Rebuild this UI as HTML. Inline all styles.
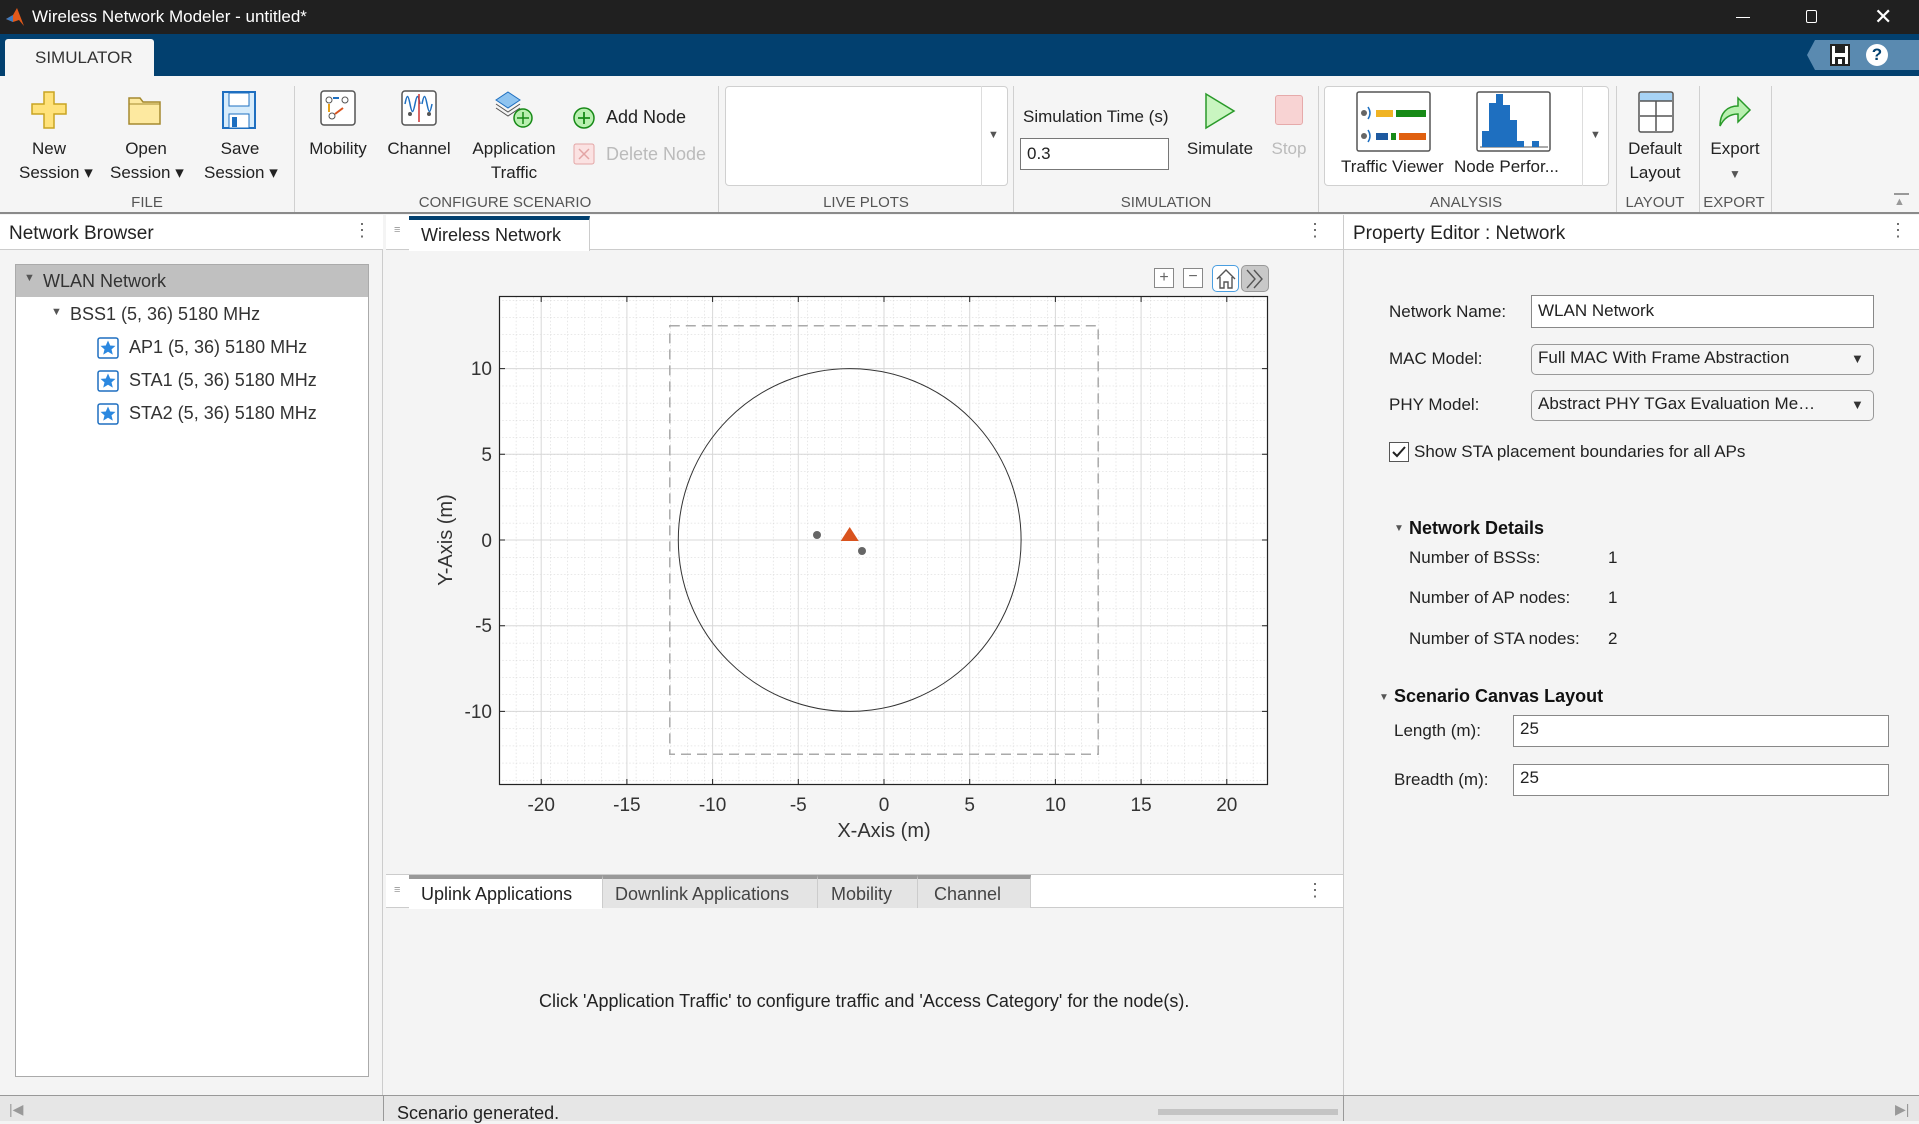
<!DOCTYPE html>
<html><head><meta charset="utf-8"><style>
*{box-sizing:border-box;margin:0;padding:0}
body{width:1919px;height:1121px;overflow:hidden;position:relative;background:#f4f4f4;font-family:"Liberation Sans",sans-serif;color:#222}
.a{position:absolute}
.t{position:absolute;white-space:nowrap}
.rb{font-size:17px;color:#222;text-align:center;line-height:24px}
.sec{position:absolute;top:194px;font-size:15px;color:#555;transform:translateX(-50%);white-space:nowrap}
.sep{position:absolute;top:86px;width:1px;height:126px;background:#d0d0d0}
.lbl{font-size:17px;color:#222}
</style></head><body>
<!-- title bar -->
<div class="a" style="left:0;top:0;width:1919px;height:34px;background:#202020"></div>
<svg class="a" style="left:4px;top:6px" width="22" height="22" viewBox="0 0 22 22"><path d="M2 13 L9 9 L13 2 L20 20 L15 14 L9 16 Z" fill="#e2591a"/><path d="M2 13 L9 9 L9 16Z" fill="#3d7bbf"/></svg>
<div class="t" style="left:32px;top:7px;color:#fff;font-size:17px">Wireless Network Modeler - untitled*</div>
<div class="a" style="left:1736px;top:17px;width:14px;height:1px;background:#fff"></div>
<div class="a" style="left:1806px;top:10px;width:11px;height:13px;border:1.5px solid #fff;border-radius:2px"></div>
<div class="t" style="left:1874px;top:4px;color:#fff;font-size:22px">✕</div>
<!-- blue bar -->
<div class="a" style="left:0;top:34px;width:1919px;height:42px;background:#02406f"></div>
<div class="a" style="left:5px;top:39px;width:149px;height:37px;background:#f5f5f5;border-radius:3px 3px 0 0"></div>
<div class="t" style="left:35px;top:48px;font-size:17px;color:#333">SIMULATOR</div>
<div class="a" style="left:1807px;top:40px;width:112px;height:30px;background:#5a8ab0;clip-path:polygon(8px 0,100% 0,100% 100%,8px 100%,0 50%)"></div>
<svg class="a" style="left:1829px;top:43px" width="22" height="24"><rect x="2" y="2" width="18" height="20" fill="#fff" stroke="#222" stroke-width="2"/><rect x="6" y="3" width="10" height="7" fill="#222"/><rect x="6" y="14" width="10" height="8" fill="#222"/><rect x="9" y="16" width="4" height="5" fill="#fff"/></svg>
<div class="a" style="left:1866px;top:44px;width:22px;height:22px;border-radius:50%;background:#fff;color:#02406f;font-weight:bold;font-size:17px;text-align:center;line-height:22px">?</div>
<!-- ribbon -->
<div class="a" style="left:0;top:76px;width:1919px;height:138px;background:#f5f5f5;border-bottom:2px solid #8a8a8a"></div>
<svg class="a" style="left:30px;top:90px" width="40" height="40"><path d="M14 2h10v12h12v10H24v14H14V24H2V14h12z" fill="#ffe27a" stroke="#c9a422" stroke-width="1.5"/></svg>
<div class="t rb" style="left:19px;top:137px;width:60px">New<br>Session ▾</div>
<svg class="a" style="left:126px;top:92px" width="38" height="36"><path d="M3 6h11l3 4h17v22H3z" fill="#fde9a0" stroke="#a58a30" stroke-width="1.5"/><path d="M3 12h31" stroke="#a58a30"/></svg>
<div class="t rb" style="left:110px;top:137px;width:72px">Open<br>Session ▾</div>
<svg class="a" style="left:221px;top:90px" width="36" height="40"><rect x="2" y="2" width="32" height="36" fill="#d7ecfb" stroke="#1e6fc0" stroke-width="2"/><rect x="8" y="3" width="20" height="13" fill="#fff" stroke="#1e6fc0"/><rect x="8" y="24" width="20" height="14" fill="#fff" stroke="#1e6fc0"/><rect x="11" y="27" width="5" height="10" fill="#1e6fc0"/></svg>
<div class="t rb" style="left:204px;top:137px;width:72px">Save<br>Session ▾</div>
<div class="sep" style="left:294px"></div>
<svg class="a" style="left:320px;top:90px" width="36" height="36"><rect x="1" y="1" width="34" height="34" rx="3" fill="#fff" stroke="#555" stroke-width="1.5"/><circle cx="9" cy="10" r="3" fill="none" stroke="#555"/><circle cx="25" cy="10" r="3" fill="none" stroke="#555"/><circle cx="12" cy="26" r="3" fill="none" stroke="#555"/><path d="M9 14v8" stroke="#e8a21a" stroke-width="2"/><path d="M15 24l8-6" stroke="#d9531e" stroke-width="2"/><path d="M13 8l6 0" stroke="#1e6fc0" stroke-width="2"/></svg>
<div class="t rb" style="left:302px;top:137px;width:72px">Mobility</div>
<svg class="a" style="left:401px;top:90px" width="36" height="36"><rect x="1" y="1" width="34" height="34" rx="3" fill="#fff" stroke="#555" stroke-width="1.5"/><path d="M4 14c2-10 3-10 5 0s3 10 5 0 3-10 5 0M21 14c2-10 3-10 5 0s3 10 5 0" stroke="#1e6fc0" fill="none" stroke-width="1.5"/><path d="M18 4v28" stroke="#c33" stroke-width="1.5"/><circle cx="9" cy="24" r="2" fill="#555"/><circle cx="28" cy="24" r="2" fill="#555"/></svg>
<div class="t rb" style="left:383px;top:137px;width:72px">Channel</div>
<svg class="a" style="left:494px;top:90px" width="42" height="40"><path d="M14 2l12 8-12 8-12-8z" fill="#8fc4f0" stroke="#1e6fc0"/><path d="M2 14l12 8 12-8M2 18l12 8 12-8" fill="none" stroke="#555"/><circle cx="29" cy="28" r="9" fill="#b9f0b0" stroke="#178a17" stroke-width="1.5"/><path d="M29 22v12M23 28h12" stroke="#178a17" stroke-width="1.5"/></svg>
<div class="t rb" style="left:464px;top:137px;width:100px">Application<br>Traffic</div>
<svg class="a" style="left:572px;top:106px" width="24" height="24"><circle cx="12" cy="12" r="10" fill="#b9f0b0" stroke="#178a17" stroke-width="1.5"/><path d="M12 6v12M6 12h12" stroke="#178a17" stroke-width="1.8"/></svg>
<div class="t" style="left:606px;top:107px;font-size:18px">Add Node</div>
<svg class="a" style="left:573px;top:143px" width="22" height="22"><rect x="1" y="1" width="20" height="20" rx="2" fill="#fbe2e2" stroke="#e3a5a5"/><path d="M6 6l10 10M16 6L6 16" stroke="#e3a5a5" stroke-width="1.5"/></svg>
<div class="t" style="left:606px;top:144px;font-size:18px;color:#bbb">Delete Node</div>
<div class="sep" style="left:718px"></div>
<div class="a" style="left:725px;top:86px;width:283px;height:100px;background:#fff;border:1px solid #d0d0d0;border-radius:4px"></div>
<div class="a" style="left:981px;top:86px;width:1px;height:100px;background:#ddd"></div>
<div class="t" style="left:988px;top:129px;font-size:11px;color:#555">▼</div>
<div class="sep" style="left:1013px"></div>
<div class="t" style="left:1023px;top:107px;font-size:17px">Simulation Time (s)</div>
<div class="a" style="left:1020px;top:138px;width:149px;height:32px;background:#fff;border:1px solid #777"></div>
<div class="t" style="left:1027px;top:144px;font-size:17px">0.3</div>
<svg class="a" style="left:1203px;top:92px" width="34" height="38"><path d="M3 2l28 17L3 36z" fill="#c9f5c0" stroke="#2a9a2a" stroke-width="1.5"/></svg>
<div class="t rb" style="left:1180px;top:137px;width:80px">Simulate</div>
<div class="a" style="left:1275px;top:95px;width:28px;height:30px;background:#f8d3d3;border:1px solid #e6aaaa;border-radius:3px"></div>
<div class="t rb" style="left:1264px;top:137px;width:50px;color:#bbb">Stop</div>
<div class="sep" style="left:1318px"></div>
<div class="a" style="left:1324px;top:86px;width:285px;height:100px;background:#fff;border:1px solid #d0d0d0;border-radius:4px"></div>
<div class="a" style="left:1582px;top:86px;width:1px;height:100px;background:#ddd"></div>
<div class="t" style="left:1590px;top:129px;font-size:11px;color:#555">▼</div>
<svg class="a" style="left:1356px;top:91px" width="75" height="61"><rect x="1" y="1" width="73" height="59" rx="2" fill="#fff" stroke="#555" stroke-width="1.5"/><circle cx="8" cy="22" r="3" fill="#666"/><circle cx="8" cy="45" r="3" fill="#666"/><path d="M12 16q4 6 0 12M12 39q4 6 0 12" stroke="#1e6fc0" fill="none" stroke-width="1.5"/><rect x="20" y="19" width="17" height="7" fill="#f0b323"/><rect x="40" y="19" width="30" height="7" fill="#178a17"/><rect x="20" y="42" width="12" height="7" fill="#1e5aa0"/><rect x="35" y="42" width="5" height="7" fill="#178a17"/><rect x="43" y="42" width="27" height="7" fill="#e0600f"/></svg>
<svg class="a" style="left:1476px;top:91px" width="75" height="61"><rect x="1" y="1" width="73" height="59" rx="2" fill="#fff" stroke="#555" stroke-width="1.5"/><path d="M4 56h68" stroke="#555"/><rect x="6" y="40" width="7" height="16" fill="#1e6fc0"/><rect x="13" y="12" width="7" height="44" fill="#1e6fc0"/><rect x="20" y="3" width="7" height="53" fill="#1e6fc0"/><rect x="27" y="14" width="7" height="42" fill="#1e6fc0"/><rect x="34" y="29" width="7" height="27" fill="#1e6fc0"/><rect x="41" y="50" width="7" height="6" fill="#1e6fc0"/><rect x="56" y="50" width="7" height="6" fill="#1e6fc0"/></svg>
<div class="t" style="left:1341px;top:157px;font-size:17px">Traffic Viewer</div>
<div class="t" style="left:1454px;top:157px;font-size:17px">Node Perfor...</div>
<div class="sep" style="left:1616px"></div>
<svg class="a" style="left:1638px;top:91px" width="36" height="42"><rect x="1" y="1" width="34" height="40" rx="2" fill="#fff" stroke="#555" stroke-width="1.5"/><rect x="2" y="2" width="32" height="8" fill="#a7d3f5"/><path d="M2 10h32M2 25h32M18 10v30" stroke="#555" stroke-width="1.5"/></svg>
<div class="t rb" style="left:1620px;top:137px;width:70px">Default<br>Layout</div>
<div class="sep" style="left:1699px"></div>
<svg class="a" style="left:1716px;top:92px" width="36" height="36"><path d="M4 34c0-14 8-20 18-20V6l12 12-12 12v-8c-8 0-14 4-18 12z" fill="#b9f0b0" stroke="#2a9a2a" stroke-width="1.5"/></svg>
<div class="t rb" style="left:1699px;top:137px;width:72px">Export<br><span style="font-size:12px;color:#555">▼</span></div>
<div class="sep" style="left:1771px"></div>
<div class="sec" style="left:147px">FILE</div>
<div class="sec" style="left:505px">CONFIGURE SCENARIO</div>
<div class="sec" style="left:866px">LIVE PLOTS</div>
<div class="sec" style="left:1166px">SIMULATION</div>
<div class="sec" style="left:1466px">ANALYSIS</div>
<div class="sec" style="left:1655px">LAYOUT</div>
<div class="sec" style="left:1734px">EXPORT</div>
<div class="a" style="left:1894px;top:193px;width:15px;height:2px;background:#999"></div>
<div class="t" style="left:1894px;top:196px;font-size:11px;color:#999">▲</div>

<!-- left panel -->
<div class="a" style="left:0;top:215px;width:383px;height:880px;background:#f4f4f4;border-right:1px solid #ccc"></div>
<div class="a" style="left:0;top:215px;width:383px;height:35px;background:#fff;border-bottom:1px solid #ccc"></div>
<div class="t" style="left:9px;top:223px;font-size:19px">Network Browser</div>
<div class="t" style="left:353px;top:220px;font-size:18px;color:#666">⋮</div>
<div class="a" style="left:15px;top:264px;width:354px;height:813px;background:#fff;border:1px solid #aaa"></div>
<div class="a" style="left:16px;top:265px;width:352px;height:32px;background:#c0c0c0"></div>
<div class="t" style="left:24px;top:272px;font-size:11px;color:#555">▼</div>
<div class="t" style="left:43px;top:271px;font-size:18px;color:#333">WLAN Network</div>
<div class="t" style="left:51px;top:306px;font-size:11px;color:#555">▼</div>
<div class="t" style="left:70px;top:304px;font-size:18px;color:#333">BSS1 (5, 36) 5180 MHz</div>
<svg class="a" style="left:97px;top:337px" width="22" height="22"><rect x="1" y="1" width="20" height="20" rx="2" fill="#fff" stroke="#1e6fc0" stroke-width="1.5"/><path d="M11 3.5l2.2 5 5.3.4-4 3.5 1.3 5.2L11 14.8l-4.8 2.8 1.3-5.2-4-3.5 5.3-.4z" fill="#2b88e0"/></svg>
<svg class="a" style="left:97px;top:370px" width="22" height="22"><rect x="1" y="1" width="20" height="20" rx="2" fill="#fff" stroke="#1e6fc0" stroke-width="1.5"/><path d="M11 3.5l2.2 5 5.3.4-4 3.5 1.3 5.2L11 14.8l-4.8 2.8 1.3-5.2-4-3.5 5.3-.4z" fill="#2b88e0"/></svg>
<svg class="a" style="left:97px;top:403px" width="22" height="22"><rect x="1" y="1" width="20" height="20" rx="2" fill="#fff" stroke="#1e6fc0" stroke-width="1.5"/><path d="M11 3.5l2.2 5 5.3.4-4 3.5 1.3 5.2L11 14.8l-4.8 2.8 1.3-5.2-4-3.5 5.3-.4z" fill="#2b88e0"/></svg>
<div class="t" style="left:129px;top:337px;font-size:18px;color:#333">AP1 (5, 36) 5180 MHz</div>
<div class="t" style="left:129px;top:370px;font-size:18px;color:#333">STA1 (5, 36) 5180 MHz</div>
<div class="t" style="left:129px;top:403px;font-size:18px;color:#333">STA2 (5, 36) 5180 MHz</div>

<!-- center -->
<div class="a" style="left:386px;top:215px;width:957px;height:35px;background:#fff;border-bottom:1px solid #ccc"></div>
<div class="t" style="left:394px;top:224px;font-size:11px;color:#999">≡</div>
<div class="a" style="left:409px;top:216px;width:181px;height:35px;background:#fff;border-top:4px solid #02406f;border-right:1px solid #ccc"></div>
<div class="t" style="left:421px;top:225px;font-size:18px;color:#222">Wireless Network</div>
<div class="t" style="left:1306px;top:220px;font-size:18px;color:#666">⋮</div>
<div class="a" style="left:1343px;top:215px;width:1px;height:880px;background:#ccc"></div>
<!-- plot toolbar -->
<div class="a" style="left:1154px;top:268px;width:20px;height:20px;border:1px solid #888;background:#fff;text-align:center;line-height:17px;color:#666;font-size:16px">+</div>
<div class="a" style="left:1183px;top:268px;width:20px;height:20px;border:1px solid #888;background:#fff;text-align:center;line-height:16px;color:#666;font-size:16px">−</div>
<div class="a" style="left:1212px;top:265px;width:27px;height:27px;border:1.5px solid #4a9ee0;border-radius:5px;background:#fff"></div>
<svg class="a" style="left:1214px;top:267px" width="24" height="24"><path d="M3 12L12 3l9 9M6 10v11h4v-6h4v6h4V10" fill="none" stroke="#555" stroke-width="1.4"/></svg>
<div class="a" style="left:1241px;top:265px;width:28px;height:27px;border-radius:5px;background:#c8c8c8;border:1px solid #999"></div>
<svg class="a" style="left:1243px;top:268px" width="24" height="22"><path d="M4 2l8 9-8 9M11 2l8 9-8 9" fill="none" stroke="#555" stroke-width="1.4"/></svg>
<!-- plot -->
<svg class="a" style="left:0;top:0" width="1919" height="1121">
<defs>
<pattern id="mg" x="498.7" y="368.6" width="17.14" height="17.14" patternUnits="userSpaceOnUse">
<path d="M0 0V17.14M0 0H17.14" stroke="#cfcfcf" stroke-width="1" stroke-dasharray="1.5 2" fill="none"/>
</pattern>
<clipPath id="cp"><rect x="499" y="296" width="769" height="489"/></clipPath>
</defs>
<rect x="499" y="296" width="769" height="489" fill="#fff"/>
<g clip-path="url(#cp)">
<rect x="499" y="296" width="769" height="489" fill="url(#mg)"/>
<g stroke="#d8d8d8" stroke-width="1">
<path d="M541.2 296v489M626.9 296v489M712.6 296v489M798.3 296v489M884 296v489M969.7 296v489M1055.4 296v489M1141.1 296v489M1226.8 296v489"/>
<path d="M499 368.6h769M499 454.3h769M499 540h769M499 625.7h769M499 711.4h769"/>
</g>
<rect x="669.8" y="325.8" width="428.4" height="428.4" fill="none" stroke="#aaa" stroke-width="1.5" stroke-dasharray="10 6"/>
<circle cx="849.7" cy="540" r="171.4" fill="none" stroke="#333" stroke-width="1"/>
<path d="M849.7 527l-9 14h18z" fill="#d9531e"/>
<circle cx="817" cy="535" r="4" fill="#666"/>
<circle cx="862" cy="551" r="4" fill="#666"/>
</g>
<rect x="499.5" y="296.5" width="768" height="488" fill="none" stroke="#222" stroke-width="1.2"/>
<g stroke="#222" stroke-width="1">
<path d="M541.2 785v-6M626.9 785v-6M712.6 785v-6M798.3 785v-6M884 785v-6M969.7 785v-6M1055.4 785v-6M1141.1 785v-6M1226.8 785v-6"/>
<path d="M541.2 296v6M626.9 296v6M712.6 296v6M798.3 296v6M884 296v6M969.7 296v6M1055.4 296v6M1141.1 296v6M1226.8 296v6"/>
<path d="M499 368.6h6M499 454.3h6M499 540h6M499 625.7h6M499 711.4h6"/>
<path d="M1268 368.6h-6M1268 454.3h-6M1268 540h-6M1268 625.7h-6M1268 711.4h-6"/>
</g>
<g font-family="Liberation Sans, sans-serif" font-size="19" fill="#333" text-anchor="middle">
<text x="541.2" y="811">-20</text><text x="626.9" y="811">-15</text><text x="712.6" y="811">-10</text><text x="798.3" y="811">-5</text><text x="884" y="811">0</text><text x="969.7" y="811">5</text><text x="1055.4" y="811">10</text><text x="1141.1" y="811">15</text><text x="1226.8" y="811">20</text>
<text x="884" y="837" font-size="20">X-Axis (m)</text>
<text x="452" y="540" font-size="20" transform="rotate(-90 452 540)">Y-Axis (m)</text>
</g>
<g font-family="Liberation Sans, sans-serif" font-size="19" fill="#333" text-anchor="end">
<text x="492" y="375">10</text><text x="492" y="461">5</text><text x="492" y="547">0</text><text x="492" y="632">-5</text><text x="492" y="718">-10</text>
</g>
</svg>
<!-- bottom tabs -->
<div class="a" style="left:386px;top:874px;width:957px;height:34px;background:#fff;border-top:1px solid #ccc;border-bottom:1px solid #ccc"></div>
<div class="t" style="left:394px;top:884px;font-size:11px;color:#999">≡</div>
<div class="a" style="left:409px;top:875px;width:193px;height:34px;background:#fff;border-top:4px solid #999"></div>
<div class="a" style="left:602px;top:875px;width:216px;height:33px;background:#e4e4e4;border-top:4px solid #999;border-right:1px solid #ccc;border-left:1px solid #ccc"></div>
<div class="a" style="left:818px;top:875px;width:100px;height:33px;background:#e4e4e4;border-top:4px solid #999;border-right:1px solid #ccc"></div>
<div class="a" style="left:918px;top:875px;width:113px;height:33px;background:#e4e4e4;border-top:4px solid #999;border-right:1px solid #ccc"></div>
<div class="t" style="left:421px;top:884px;font-size:18px">Uplink Applications</div>
<div class="t" style="left:615px;top:884px;font-size:18px;color:#444">Downlink Applications</div>
<div class="t" style="left:831px;top:884px;font-size:18px;color:#444">Mobility</div>
<div class="t" style="left:934px;top:884px;font-size:18px;color:#444">Channel</div>
<div class="t" style="left:1306px;top:880px;font-size:18px;color:#666">⋮</div>
<div class="t" style="left:539px;top:991px;font-size:18px;color:#222">Click 'Application Traffic' to configure traffic and 'Access Category' for the node(s).</div>

<!-- right panel -->
<div class="a" style="left:1344px;top:215px;width:575px;height:35px;background:#fff;border-bottom:1px solid #ccc"></div>
<div class="t" style="left:1353px;top:223px;font-size:19px">Property Editor : Network</div>
<div class="t" style="left:1889px;top:220px;font-size:18px;color:#666">⋮</div>
<div class="t lbl" style="left:1389px;top:302px">Network Name:</div>
<div class="a" style="left:1531px;top:295px;width:343px;height:33px;background:#fff;border:1px solid #888"></div>
<div class="t lbl" style="left:1538px;top:301px">WLAN Network</div>
<div class="t lbl" style="left:1389px;top:349px">MAC Model:</div>
<div class="a" style="left:1531px;top:344px;width:343px;height:31px;background:#f5f5f5;border:1px solid #999;border-radius:5px"></div>
<div class="t lbl" style="left:1538px;top:348px">Full MAC With Frame Abstraction</div>
<div class="t" style="left:1851px;top:351px;font-size:13px;color:#333">▼</div>
<div class="t lbl" style="left:1389px;top:395px">PHY Model:</div>
<div class="a" style="left:1531px;top:390px;width:343px;height:31px;background:#f5f5f5;border:1px solid #999;border-radius:5px"></div>
<div class="t lbl" style="left:1538px;top:394px">Abstract PHY TGax Evaluation Me…</div>
<div class="t" style="left:1851px;top:397px;font-size:13px;color:#333">▼</div>
<div class="a" style="left:1389px;top:442px;width:20px;height:20px;background:#fff;border:1px solid #555"></div>
<svg class="a" style="left:1391px;top:444px" width="16" height="16"><path d="M2 8l4 4 8-9" fill="none" stroke="#222" stroke-width="2"/></svg>
<div class="t lbl" style="left:1414px;top:442px">Show STA placement boundaries for all APs</div>
<div class="t" style="left:1394px;top:523px;font-size:10px;color:#555">▼</div>
<div class="t" style="left:1409px;top:518px;font-size:18px;font-weight:bold;color:#111">Network Details</div>
<div class="t lbl" style="left:1409px;top:548px">Number of BSSs:</div><div class="t lbl" style="left:1608px;top:548px">1</div>
<div class="t lbl" style="left:1409px;top:588px">Number of AP nodes:</div><div class="t lbl" style="left:1608px;top:588px">1</div>
<div class="t lbl" style="left:1409px;top:629px">Number of STA nodes:</div><div class="t lbl" style="left:1608px;top:629px">2</div>
<div class="t" style="left:1379px;top:692px;font-size:10px;color:#555">▼</div>
<div class="t" style="left:1394px;top:686px;font-size:18px;font-weight:bold;color:#111">Scenario Canvas Layout</div>
<div class="t lbl" style="left:1394px;top:721px">Length (m):</div>
<div class="a" style="left:1513px;top:715px;width:376px;height:32px;background:#fff;border:1px solid #888"></div>
<div class="t lbl" style="left:1520px;top:719px">25</div>
<div class="t lbl" style="left:1394px;top:770px">Breadth (m):</div>
<div class="a" style="left:1513px;top:764px;width:376px;height:32px;background:#fff;border:1px solid #888"></div>
<div class="t lbl" style="left:1520px;top:768px">25</div>

<!-- status bar -->
<div class="a" style="left:0;top:1095px;width:1919px;height:26px;background:#e6e6e6;border-top:1px solid #999"></div>
<div class="a" style="left:383px;top:1095px;width:1px;height:26px;background:#999"></div>
<div class="a" style="left:1343px;top:1095px;width:1px;height:26px;background:#999"></div>
<div class="t" style="left:397px;top:1103px;font-size:18px">Scenario generated.</div>
<div class="a" style="left:1158px;top:1109px;width:180px;height:6px;background:#c4c4c4"></div>
<div class="t" style="left:9px;top:1101px;font-size:14px;color:#999">|◀</div>
<div class="t" style="left:1895px;top:1101px;font-size:14px;color:#999">▶|</div>
</body></html>
